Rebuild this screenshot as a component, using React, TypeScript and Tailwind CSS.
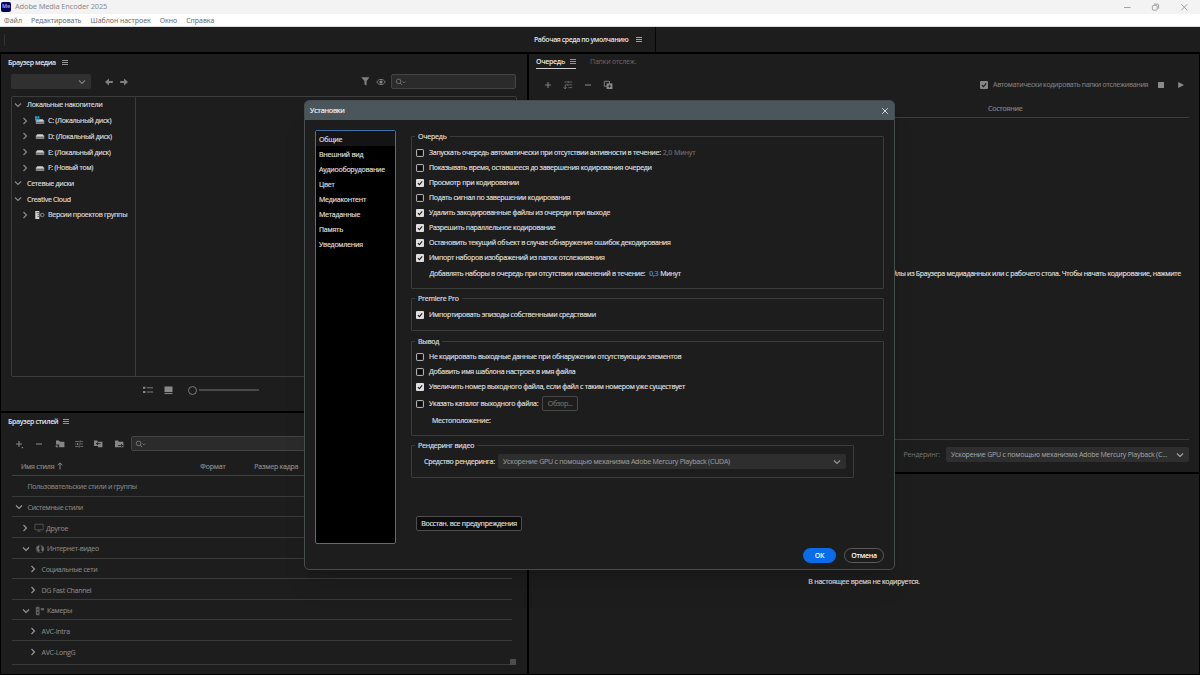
import React from "react";
import clsx from "clsx";

type IconProps = { className?: string };

const Chevron = ({ className, open }: IconProps & { open?: boolean }) => (
  <svg viewBox="0 0 8 8" className={clsx("w-2 h-2 shrink-0 fill-none stroke-current", className)}>
    <path d={open ? "M1 2.5 4 5.5 7 2.5" : "M2.5 1 5.5 4 2.5 7"} strokeWidth="1.1" />
  </svg>
);

const MenuIcon = ({ className }: IconProps) => (
  <svg viewBox="0 0 6 6" className={clsx("w-1.5 h-1.5 shrink-0 stroke-current", className)}>
    <path d="M0 0.5h6M0 2.5h6M0 4.5h6" strokeWidth="0.9" />
  </svg>
);

const ArrowIcon = ({ className }: IconProps) => (
  <svg viewBox="0 0 8 8" className={clsx("w-2 h-2 shrink-0 fill-current", className)}>
    <path d="M0 4 4 0.6v2.3h3.8v2.2H4v2.3z" />
  </svg>
);

const SearchIcon = () => (
  <svg viewBox="0 0 12 8" className="w-3 h-2 shrink-0 fill-none stroke-current">
    <circle cx="3.6" cy="3.4" r="2.3" strokeWidth="0.8" />
    <path d="M5.2 5.1 7 7M7.6 3.6 8.9 4.9 10.2 3.6" strokeWidth="0.8" />
  </svg>
);

const PlusIcon = ({ dot }: { dot?: boolean }) => (
  <svg viewBox="0 0 10 10" className="w-2.5 h-2.5 shrink-0 stroke-current">
    <path d="M5 2v6M2 5h6" strokeWidth="1.1" />
    {dot && <path d="M7.7 8.6h1.4" strokeWidth="1.2" />}
  </svg>
);

const MinusIcon = () => (
  <svg viewBox="0 0 10 10" className="w-2.5 h-2.5 shrink-0 stroke-current">
    <path d="M2 5h6" strokeWidth="1.1" />
  </svg>
);

const SlidersIcon = () => (
  <svg viewBox="0 0 10 10" className="w-2.5 h-2.5 shrink-0 stroke-current">
    <path d="M1 2.5h4M7.2 2.5h2M1 5h1.4M4.6 5H9M1 7.5h3M6.2 7.5h3" strokeWidth="0.7" />
    <path d="M6.1 1.5v2M3.5 4v2M5.1 6.5v2" strokeWidth="1" />
  </svg>
);

// Queue variant with a down arrow under the sliders
const QueueSlidersIcon = () => (
  <svg viewBox="0 0 10 10" className="w-2.5 h-2.5 shrink-0 stroke-current">
    <path d="M1.4 2h3M6.2 2h3M2.4 4.8h1.6M6 4.8h3.2M5.4 7.6h3.8" strokeWidth="0.7" />
    <path d="M5.2 1v2M4.9 3.8v2" strokeWidth="0.9" />
    <path d="M2.2 4.8v4M0.7 7.3 2.2 8.9 3.7 7.3" strokeWidth="0.8" fill="none" />
  </svg>
);

const FolderIcon = ({ kind }: { kind: "new" | "in" | "out" }) => (
  <svg viewBox="0 0 10 10" className="w-2.5 h-2.5 shrink-0">
    <path d="M1 1.6h3l1 1.2h4.4v5.4H1z" className="fill-current" />
    {kind === "new" && <path d="M0 5.4h4.2v3.4H0z" fill="#1d1d1d" />}
    {kind === "new" && <path d="M0.4 7.2h3M1.9 5.7v3" stroke="#8a8a8a" strokeWidth="0.8" />}
    {kind === "in" && <path d="M7.5 4.6H3.4M5 3.2 3.4 4.6 5 6" stroke="#1d1d1d" strokeWidth="0.9" fill="none" />}
    {kind === "in" && <path d="M0 7h5v2H0z" fill="#1d1d1d" />}
    {kind === "out" && <path d="M4 6.6h4.6M7 5 8.6 6.6 7 8.2" stroke="#1d1d1d" strokeWidth="0.9" fill="none" />}
  </svg>
);

const DriveIcon = ({ system }: { system?: boolean }) => (
  <svg viewBox="0 0 10 10" className="w-2.5 h-2.5 shrink-0">
    <path d="M2.2 3.2h5.6L9.2 5.4H0.8z" fill="#cfcfcf" />
    <path d="M0.8 5.4h8.5v1.7H0.8z" fill="#555" />
    <path d="M0.8 5.2h8.5M0.8 7.2h8.5" stroke="#f2f2f2" strokeWidth="0.7" />
    {system && <path d="M0 0.2h2v2H0zM2.4 0.2h2v2h-2zM0 2.6h2v2H0zM2.4 2.6h2v2h-2z" fill="#2f9be0" />}
  </svg>
);

const ProjectIcon = () => (
  <svg viewBox="0 0 10 10" className="w-2.5 h-2.5 shrink-0">
    <path d="M0.3 1h4v8h-4z" fill="#d6d6d6" />
    <path d="M1.4 2.6h2.9M2.4 4.6h1.9M2.4 6.6h1.9" stroke="#333" strokeWidth="0.7" />
    <circle cx="7.4" cy="5" r="1.7" stroke="#9a9a9a" strokeWidth="0.8" fill="none" />
    <path d="M5.2 3.2v3.6" stroke="#9a9a9a" strokeWidth="0.6" />
  </svg>
);

const MonitorIcon = () => (
  <svg viewBox="0 0 10 10" className="w-2.5 h-2.5 shrink-0 fill-none stroke-[#5c5c5c]">
    <path d="M0.9 1.2h8.2v5.6H0.9zM3.4 8.2h3.2M5 7v1.2" strokeWidth="0.8" />
  </svg>
);

const GlobeIcon = () => (
  <svg viewBox="0 0 10 10" className="w-2.5 h-2.5 shrink-0">
    <circle cx="5" cy="5" r="3.9" fill="none" stroke="#555" strokeWidth="0.6" />
    <path d="M1.3 3.2 3.6 1.5 4.8 3 3.6 4.2 4.8 6 4 8.6 2 6.4zM6 1.4l2.6 2.2.2 2.6-1.6 1.4-1-2 .6-1.2z" fill="#707070" />
  </svg>
);

const CameraIcon = () => (
  <svg viewBox="0 0 10 10" className="w-2.5 h-2.5 shrink-0">
    <rect x="0.8" y="0.8" width="3.8" height="8.4" rx="1" fill="#5f5f5f" />
    <path d="M1.8 3.6h1.8" stroke="#2a2a2a" strokeWidth="0.7" />
    <circle cx="2.7" cy="6.6" r="0.9" fill="#2a2a2a" />
    <path d="M5.8 2h3.2v2.4H5.8z" fill="#5f5f5f" />
  </svg>
);

const Checkbox = ({ checked, dim }: { checked?: boolean; dim?: boolean }) => (
  <svg viewBox="0 0 8 8" className="w-2 h-2 shrink-0">
    {checked ? (
      <>
        <rect width="8" height="8" rx="1" fill={dim ? "#858585" : "#dedede"} />
        <path d="M1.9 4.1 3.4 5.6 6.2 2.3" fill="none" stroke="#1d1d1d" strokeWidth="1.1" />
      </>
    ) : (
      <rect x="0.6" y="0.6" width="6.8" height="6.8" rx="0.6" fill="#0c0c0c" stroke="#c0c0c0" strokeWidth="1" />
    )}
  </svg>
);

const drives = [
  { label: "Локальные накопители", level: 0, open: true },
  { label: "C: (Локальный диск)", level: 1, icon: <DriveIcon system /> },
  { label: "D: (Локальный диск)", level: 1, icon: <DriveIcon /> },
  { label: "E: (Локальный диск)", level: 1, icon: <DriveIcon /> },
  { label: "F: (Новый том)", level: 1, icon: <DriveIcon /> },
  { label: "Сетевые диски", level: 0, open: true },
  { label: "Creative Cloud", level: 0, open: true },
  { label: "Версии проектов группы", level: 1, icon: <ProjectIcon /> },
];

const presets = [
  { label: "Пользовательские стили и группы", pad: "pl-[3px]", hideArrow: true },
  { label: "Системные стили", pad: "pl-[3px]", open: true },
  { label: "Другое", pad: "pl-[9px]", icon: <MonitorIcon /> },
  { label: "Интернет-видео", pad: "pl-[10px]", open: true, icon: <GlobeIcon /> },
  { label: "Социальные сети", pad: "pl-[17px]" },
  { label: "DG Fast Channel", pad: "pl-[17px]" },
  { label: "Камеры", pad: "pl-[10px]", open: true, icon: <CameraIcon /> },
  { label: "AVC-Intra", pad: "pl-[17px]" },
  { label: "AVC-LongG", pad: "pl-[17px]" },
];

const sections = [
  "Общие",
  "Внешний вид",
  "Аудиооборудование",
  "Цвет",
  "Медиаконтент",
  "Метаданные",
  "Память",
  "Уведомления",
];

const queueOptions = [
  { label: "Показывать время, оставшееся до завершения кодирования очереди", checked: false },
  { label: "Просмотр при кодировании", checked: true },
  { label: "Подать сигнал по завершении кодирования", checked: false },
  { label: "Удалить закодированные файлы из очереди при выходе", checked: true },
  { label: "Разрешить параллельное кодирование", checked: true },
  { label: "Остановить текущий объект в случае обнаружения ошибок декодирования", checked: true },
  { label: "Импорт наборов изображений из папок отслеживания", checked: true },
];

const outputOptions = [
  { label: "Не кодировать выходные данные при обнаружении отсутствующих элементов", checked: false },
  { label: "Добавить имя шаблона настроек в имя файла", checked: false },
  { label: "Увеличить номер выходного файла, если файл с таким номером уже существует", checked: true },
];

const OptionRow = ({ label, checked, children }: { label: string; checked?: boolean; children?: React.ReactNode }) => (
  <div className="h-[15px] flex items-center tracking-[-0.28px]">
    <Checkbox checked={checked} />
    <span className="ml-[5px]">{label}</span>
    {children}
  </div>
);

const Group = ({ title, className, children }: { title: string; className?: string; children: React.ReactNode }) => (
  <div className={clsx("flex flex-col border border-[#3b3b3b] rounded-[1px]", className)}>
    <div className="h-[10px] -mt-[6px] ml-[3px] px-[3px] self-start flex items-center bg-[#1d1d1d] shrink-0">
      {title}
    </div>
    {children}
  </div>
);

const TitleBar = () => (
  <>
    <div className="h-[14px] bg-[#f3f3f3] flex items-center shrink-0 text-[#8b8b8b]">
      <div className="ml-[1px] w-[10px] h-[10px] bg-[#00005b] rounded-[2px] flex items-center justify-center text-[5.5px] font-bold text-[#9999ff]">
        Me
      </div>
      <span className="ml-[4px] text-[7.4px] tracking-[-0.12px] font-['Noto_Sans']">Adobe Media Encoder 2025</span>
      <svg viewBox="0 0 68 8" className="ml-auto mr-[10px] w-[68px] h-2 fill-none stroke-[#8b8b8b]">
        <path d="M2 4.5h6.5" strokeWidth="0.8" />
        <rect x="30.4" y="2.4" width="4.8" height="4.8" rx="1" strokeWidth="0.8" />
        <path d="M32 1.1h3.6a1 1 0 0 1 1 1v3.6M59.3 1.2l6 6M65.3 1.2l-6 6" strokeWidth="0.8" />
      </svg>
    </div>
    <div className="h-[13px] bg-white flex items-center shrink-0 pl-[4px] gap-[9px] text-[7px] tracking-[-0.02px] font-['Noto_Sans'] text-[#6b6b6b] border-b border-[#dcdcdc]">
      <span>Файл</span>
      <span>Редактировать</span>
      <span>Шаблон настроек</span>
      <span>Окно</span>
      <span>Справка</span>
    </div>
  </>
);

const WorkspaceBar = () => (
  <div className="h-[25px] bg-[#1d1d1d] flex items-center shrink-0">
    <div className="ml-[4px] w-px h-[12px] bg-[#333]" />
    <span className="ml-[529px] w-[96px] font-semibold tracking-[-0.43px] text-[#e2e2e2]">
      Рабочая среда по умолчанию
    </span>
    <MenuIcon className="ml-[6px] mt-px text-[#b0b0b0]" />
    <div className="ml-[13px] w-px h-full bg-[#060606]" />
  </div>
);

const MediaBrowser = () => (
  <div className="h-[357px] bg-[#1d1d1d] flex flex-col shrink-0">
    <div className="h-[16px] flex items-center pl-[7px] shrink-0">
      <span className="w-[48px] font-semibold tracking-[-0.42px] text-[#e6e6e6]">Браузер медиа</span>
      <MenuIcon className="ml-[6px] mt-px text-[#a0a0a0]" />
    </div>
    <div className="mt-[4px] h-[15px] flex items-center pl-[10px] pr-[11px] shrink-0 text-[#808080]">
      <div className="w-[80px] h-[15px] rounded-[2px] bg-[#303030] flex items-center justify-end pr-[5px]">
        <Chevron open />
      </div>
      <ArrowIcon className="ml-[14px]" />
      <ArrowIcon className="ml-[7px] rotate-180" />
      <svg viewBox="0 0 9 9" className="ml-auto w-[9px] h-[9px] fill-current">
        <path d="M0.3 0.3h8.2L5.6 4v4.6L3.5 7.4V4z" />
      </svg>
      <svg viewBox="0 0 10 8" className="ml-[6px] w-[10px] h-2">
        <path d="M0.8 4C2.6 0.6 7.4 0.6 9.2 4 7.4 7.4 2.6 7.4 0.8 4z" fill="none" stroke="#888" strokeWidth="0.9" />
        <circle cx="5" cy="4" r="1.6" fill="#888" />
      </svg>
      <div className="ml-[5px] w-[125px] h-[15px] rounded-[2px] border border-[#444] bg-[#2b2b2b] flex items-center pl-[3px]">
        <SearchIcon />
      </div>
    </div>
    <div className="mt-[7px] mx-[10px] h-[281px] flex border border-[#3c3c3c] rounded-[2px] shrink-0">
      <div className="w-[124px] border-r border-[#3c3c3c] flex flex-col text-[#d6d6d6] tracking-[-0.28px] [-webkit-text-stroke:0.2px]">
        {drives.map((drive) => (
          <div
            key={drive.label}
            className={clsx("h-[15.72px] flex items-center", drive.level === 0 ? "pl-[2px]" : "pl-[9px]")}
          >
            <Chevron open={drive.open} className="text-[#8c8c8c]" />
            {drive.icon && <span className="ml-[6px]">{drive.icon}</span>}
            <span className={drive.icon ? "ml-[3px]" : "ml-[5px]"}>{drive.label}</span>
          </div>
        ))}
      </div>
    </div>
    <div className="mt-[8px] h-[10px] flex items-center pl-[142px] shrink-0">
      <svg viewBox="0 0 10 8" className="w-[10px] h-2">
        <path d="M0 0.8h2.4v2H0zM0 5h2.4v2H0z" fill="#888" />
        <path d="M3.8 1.8H10M3.8 6H10" stroke="#888" strokeWidth="0.9" />
      </svg>
      <svg viewBox="0 0 9 9" className="ml-[11px] w-[9px] h-[9px]">
        <path d="M0.5 0.5h8v5.6h-8z" fill="#8a8a8a" />
        <path d="M0.5 7.6h8" stroke="#8a8a8a" strokeWidth="1" />
      </svg>
      <div className="ml-[15px] w-[9px] h-[9px] rounded-full border border-[#7a7a7a]" />
      <div className="ml-[2px] w-[60px] h-[1.5px] bg-[#4a4a4a]" />
    </div>
  </div>
);

const PresetBrowser = () => (
  <div className="h-[261px] bg-[#1d1d1d] flex flex-col text-[#868686]">
    <div className="h-[16px] flex items-center pl-[7px] shrink-0">
      <span className="w-[50px] font-semibold tracking-[-0.36px] text-[#e6e6e6]">Браузер стилей</span>
      <MenuIcon className="ml-[5px] mt-px text-[#a0a0a0]" />
    </div>
    <div className="mt-[7px] h-[15px] flex items-center pl-[13px] shrink-0">
      <PlusIcon dot />
      <span className="ml-[10px]"><MinusIcon /></span>
      <span className="ml-[11px]"><FolderIcon kind="new" /></span>
      <span className="ml-[9px]"><SlidersIcon /></span>
      <span className="ml-[9px]"><FolderIcon kind="in" /></span>
      <span className="ml-[11px]"><FolderIcon kind="out" /></span>
      <div className="ml-[7px] w-[385px] h-[15px] rounded-[2px] border border-[#444] bg-[#2b2b2b] flex items-center pl-[3px]">
        <SearchIcon />
      </div>
    </div>
    <div className="mt-[6px] ml-[11px] w-[500px] h-[19px] flex items-center border-b border-[#414141] shrink-0 [-webkit-text-stroke:0.2px]">
      <span className="ml-[9px]">Имя стиля</span>
      <svg viewBox="0 0 6 8" className="ml-[3px] w-1.5 h-2 fill-none stroke-current">
        <path d="M3 7.4V1M0.6 3.2 3 0.9 5.4 3.2" strokeWidth="1" />
      </svg>
      <span className="ml-[137px] w-[54px]">Формат</span>
      <span>Размер кадра</span>
    </div>
    <div className="ml-[11px] w-[500px] h-[188.5px] shrink-0 flex flex-col border-b border-[#3a3a3a] tracking-[-0.28px] [-webkit-text-stroke:0.1px]">
      {presets.map((preset) => (
        <div
          key={preset.label}
          className={clsx(
            "h-[20.65px] pt-[2px] shrink-0 flex items-center border-b border-[#3a3a3a] last:border-b-0",
            preset.pad
          )}
        >
          <Chevron open={preset.open} className={preset.hideArrow ? "invisible" : "text-[#9a9a9a]"} />
          {preset.icon && <span className="ml-[5px]">{preset.icon}</span>}
          <span className={preset.icon ? "ml-[2px]" : "ml-[4.5px]"}>{preset.label}</span>
        </div>
      ))}
    </div>
    <div className="-mt-[6px] ml-[509px] w-[6px] h-[6px] bg-[#4c4c4c] shrink-0" />
  </div>
);

const QueuePanel = () => (
  <div className="h-[418px] bg-[#1d1d1d] flex flex-col shrink-0 text-[#808080]">
    <div className="h-[15px] flex items-center pl-[7px] shrink-0">
      <div className="h-full w-[40px] pt-[1px] flex items-center border-b border-[#d0d0d0] font-semibold tracking-[-0.3px] text-[#e6e6e6]">
        Очередь
        <MenuIcon className="ml-auto mt-px text-[#a0a0a0]" />
      </div>
      <span className="ml-[14px] text-[#6c6c6c]">Папки отслеж.</span>
    </div>
    <div className="mt-[8px] h-[15px] flex items-center pl-[14px] pr-[15px] shrink-0">
      <PlusIcon />
      <span className="ml-[10px]"><QueueSlidersIcon /></span>
      <span className="ml-[10px]"><MinusIcon /></span>
      <svg viewBox="0 0 10 10" className="ml-[10px] w-2.5 h-2.5">
        <path d="M1.3 1.3h5.2v4.9H1.3z" fill="none" stroke="#8a8a8a" strokeWidth="0.9" />
        <path d="M3.6 3.4h5.8v5.6H3.6z" fill="#8a8a8a" />
        <path d="M6.5 4.6v3.2M4.9 6.2h3.2" stroke="#1d1d1d" strokeWidth="0.8" />
      </svg>
      <span className="ml-auto"><Checkbox checked dim /></span>
      <span className="ml-[5px] w-[156px] tracking-[-0.29px] [-webkit-text-stroke:0.1px]">
        Автоматически кодировать папки отслеживания
      </span>
      <div className="ml-[9px] w-[6px] h-[6px] bg-[#8a8a8a]" />
      <svg viewBox="0 0 6 6" className="ml-[14px] w-1.5 h-1.5 fill-[#8a8a8a]">
        <path d="M0.2 0 6 3 0.2 6z" />
      </svg>
    </div>
    <div className="mt-[8px] mx-[10px] h-[18px] pb-[1px] pl-[449px] flex items-center border-b border-[#3c3c3c] shrink-0 [-webkit-text-stroke:0.2px]">
      Состояние
    </div>
    <div className="mt-[147px] h-[16px] flex items-center justify-end pr-[18px] shrink-0 tracking-[-0.29px] [-webkit-text-stroke:0.2px] text-[#dcdcdc]">
      Чтобы добавить элементы в очередь, перетащите файлы из Браузера медиаданных или с рабочего стола. Чтобы начать
      кодирование, нажмите
    </div>
    <div className="mt-auto mx-[10px] mb-[3px] h-[30px] border-t border-[#3a3a3a] flex items-center justify-end shrink-0">
      <span className="text-[#747474]">Рендеринг:</span>
      <div className="ml-[6px] w-[243px] h-[15px] rounded-[2px] bg-[#2e2e2e] flex items-center pl-[5px] pr-[5px] tracking-[-0.22px] text-[#a8a8a8]">
        Ускорение GPU с помощью механизма Adobe Mercury Playback (C...
        <Chevron open className="ml-auto" />
      </div>
    </div>
  </div>
);

const SettingsDialog = () => (
  <div className="absolute left-[304px] top-[100px] w-[591px] h-[470px] rounded-[5px] border border-[#464b4e] bg-[#1d1d1d] overflow-hidden flex flex-col text-[#dcdcdc] [-webkit-text-stroke:0.2px] shadow-xl">
    <div className="h-[19px] bg-[#4b555c] flex items-center pl-[5px] pr-[5px] shrink-0 text-[7.2px] text-[#eeeeee]">
      Установки
      <svg viewBox="0 0 8 8" className="ml-auto w-2 h-2 stroke-[#e8e8e8]">
        <path d="M1.2 1.2 6.8 6.8M6.8 1.2 1.2 6.8" strokeWidth="0.9" />
      </svg>
    </div>
    <div className="flex pl-[10px] pt-[10px]">
      <div className="w-[81px] h-[414px] rounded-[2px] border border-[#3d72ad] bg-black flex flex-col shrink-0">
        {sections.map((section, i) => (
          <div key={section} className={clsx("h-[15px] pt-[1px] flex items-center pl-[3px] tracking-[-0.23px]", i === 0 && "bg-[#141414]")}>
            {section}
          </div>
        ))}
      </div>
      <div className="ml-[15px] mt-[6px] flex flex-col">
        <Group title="Очередь" className="w-[473px] h-[153px]">
          <div className="mt-[4px] pl-[4px] flex flex-col">
            <OptionRow label="Запускать очередь автоматически при отсутствии активности в течение:">
              <span className="ml-[2px] tracking-[-0.1px] text-[#6a6a6a]">2,0 Минут</span>
            </OptionRow>
            {queueOptions.map((option) => (
              <OptionRow key={option.label} {...option} />
            ))}
            <div className="h-[16px] flex items-center pl-[13.5px] tracking-[-0.28px]">
              Добавлять наборы в очередь при отсутствии изменений в течение:
              <span className="ml-[4px] mr-[2px] text-[#4a90e2]">0,3</span> Минут
            </div>
          </div>
        </Group>
        <Group title="Premiere Pro" className="mt-[9px] w-[473px] h-[33px]">
          <div className="mt-[4px] pl-[4px]">
            <OptionRow label="Импортировать эпизоды собственными средствами" checked />
          </div>
        </Group>
        <Group title="Вывод" className="mt-[10px] w-[473px] h-[95px]">
          <div className="mt-[3px] pl-[4px] flex flex-col">
            {outputOptions.map((option) => (
              <OptionRow key={option.label} {...option} />
            ))}
            <div className="mt-[2px]">
              <OptionRow label="Указать каталог выходного файла:">
                <div className="ml-[4px] w-[36px] h-[15px] rounded-[2px] border border-[#484848] flex items-center justify-center text-[#6a6a6a]">
                  Обзор...
                </div>
              </OptionRow>
            </div>
            <div className="mt-[2px] h-[15px] flex items-center pl-[16px]">Местоположение:</div>
          </div>
        </Group>
        <Group title="Рендеринг видео" className="mt-[9px] w-[443px] h-[33px]">
          <div className="mt-[4px] pl-[12px] flex items-center">
            <span className="w-[71px] tracking-[-0.25px]">Средство рендеринга:</span>
            <div className="ml-[3px] w-[348px] h-[15px] rounded-[2px] bg-[#2e2e2e] flex items-center pl-[5px] pr-[5px] tracking-[-0.22px] [-webkit-text-stroke:0.1px] text-[#989898]">
              Ускорение GPU с помощью механизма Adobe Mercury Playback (CUDA)
              <Chevron open className="ml-auto" />
            </div>
          </div>
        </Group>
        <button className="mt-[38px] ml-[5px] w-[106px] h-[15px] rounded-[2px] border border-[#4e4e4e] bg-[#0d0d0d] flex items-center justify-center tracking-[-0.25px]">
          Восстан. все предупреждения
        </button>
      </div>
    </div>
    <div className="mt-[4px] pr-[10px] flex justify-end gap-[8px] font-semibold tracking-[-0.3px] text-white [-webkit-text-stroke:0]">
      <button className="w-[33px] h-[15px] rounded-full bg-[#0a6ce8] flex items-center justify-center">ОК</button>
      <button className="w-[40px] h-[15px] rounded-full border border-[#5a5a5a] flex items-center justify-center">
        Отмена
      </button>
    </div>
  </div>
);

export default function App() {
  return (
    <div className="relative w-[1200px] h-[675px] overflow-hidden bg-black flex flex-col font-['Open_Sans','Noto_Sans',sans-serif] text-[7px] leading-none tracking-[-0.2px] whitespace-nowrap">
      <TitleBar />
      <WorkspaceBar />
      <div className="mt-[2px] pl-px pr-px flex gap-[2px]">
        <div className="w-[526px] flex flex-col gap-[2px] shrink-0">
          <MediaBrowser />
          <PresetBrowser />
        </div>
        <div className="w-[670px] flex flex-col gap-[2px]">
          <QueuePanel />
          <div className="h-[200px] bg-[#1d1d1d] pt-[104px] flex justify-center">
            <span className="h-[10px] tracking-[-0.24px] [-webkit-text-stroke:0.2px] text-[#dcdcdc]">
              В настоящее время не кодируется.
            </span>
          </div>
        </div>
      </div>
      <SettingsDialog />
    </div>
  );
}
